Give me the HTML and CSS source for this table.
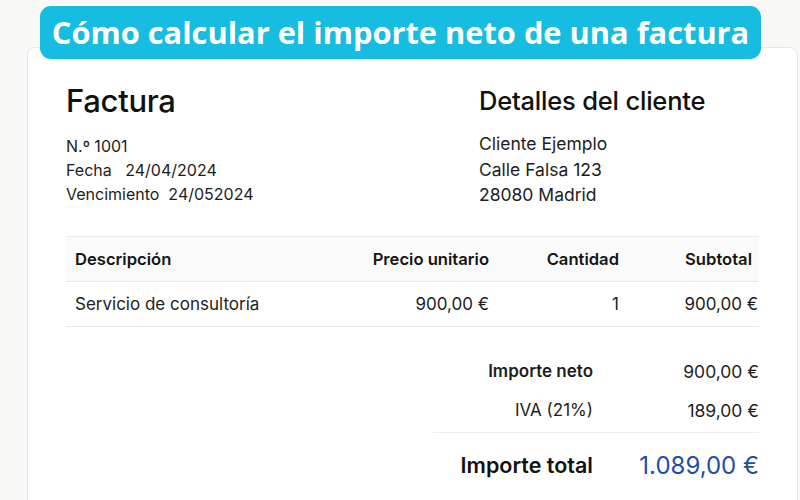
FILE: index.html
```html
<!DOCTYPE html>
<html lang="es">
<head>
<meta charset="utf-8">
<title>Factura</title>
<link rel="stylesheet" href="styles.css">
</head>
<body>
<div class="page">
  <h1 class="banner">Cómo calcular el importe neto de una factura</h1>
  <div class="card">
    <div class="top">
      <div class="col-left">
        <h2 class="h-invoice">Factura</h2>
        <div class="meta">
          <div>N.º 1001</div>
          <div>Fecha&nbsp;&nbsp; 24/04/2024</div>
          <div>Vencimiento&nbsp; 24/052024</div>
        </div>
      </div>
      <div class="col-right">
        <h2 class="h-client">Detalles del cliente</h2>
        <div class="client">
          <div>Cliente Ejemplo</div>
          <div>Calle Falsa 123</div>
          <div>28080 Madrid</div>
        </div>
      </div>
    </div>
    <div class="table">
      <div class="row head">
        <div class="c-desc">Descripción</div>
        <div class="c-price">Precio unitario</div>
        <div class="c-qty">Cantidad</div>
        <div class="c-sub">Subtotal</div>
      </div>
      <div class="row">
        <div class="c-desc">Servicio de consultoría</div>
        <div class="c-price">900,00 €</div>
        <div class="c-qty">1</div>
        <div class="c-sub val">900,00 €</div>
      </div>
    </div>
    <div class="totals">
      <div class="t-row">
        <div class="t-label strong">Importe neto</div>
        <div class="t-val">900,00 €</div>
      </div>
      <div class="t-row">
        <div class="t-label">IVA (21%)</div>
        <div class="t-val">189,00 €</div>
      </div>
      <div class="t-row total">
        <div class="t-label">Importe total</div>
        <div class="t-val">1.089,00 €</div>
      </div>
    </div>
  </div>
</div>
</body>
</html>
```

FILE: styles.css
```css
* { box-sizing: border-box; }
html, body { margin: 0; padding: 0; }
body {
  background: #f8f8f7;
  font-family: Inter, "Liberation Sans", sans-serif;
  color: #1a1a1a;
  width: 800px;
  height: 500px;
  overflow: hidden;
}
.page {
  padding-top: 6px;
  display: flex;
  flex-direction: column;
}
.banner {
  position: relative;
  z-index: 2;
  margin: 0 0 0 40px;
  width: 721px;
  height: 53px;
  background: #16bde0;
  border-radius: 11px;
  color: #fff;
  font-family: "Open Sans", sans-serif;
  font-weight: 700;
  font-size: 30.8px;
  line-height: 53px;
  text-align: center;
  letter-spacing: 0;
}
.card {
  margin: -12px 0 0 27px;
  width: 771px;
  height: 470px;
  background: #fff;
  border: 1px solid #e6e6e6;
  border-radius: 8px;
  padding: 34px 38px 0 38px;
}
.top {
  display: flex;
}
.col-left { width: 413px; }
.col-right { flex: 1; }
h2 {
  margin: 0;
  font-weight: 500;
  color: #111;
}
.h-invoice {
  font-size: 31px;
  line-height: 38px;
  letter-spacing: -0.3px;
}
.h-client {
  font-size: 25.5px;
  line-height: 38px;
  letter-spacing: -0.2px;
}
.meta {
  margin-top: 14px;
  font-size: 16px;
  line-height: 24px;
  color: #1d1d1d;
}
.client {
  margin-top: 11px;
  font-size: 17.5px;
  line-height: 25.5px;
  color: #1d1d1d;
}
.table {
  margin-top: 28px;
  border-top: 1px solid #ebebeb;
}
.row {
  display: grid;
  grid-template-columns: 1fr 150px 130px 140px;
  height: 45px;
  align-items: center;
  border-bottom: 1px solid #e8e8e8;
  font-size: 17px;
  color: #1d1d1d;
}
.row.head {
  background: #fafafa;
  font-weight: 600;
  font-size: 16.6px;
  color: #151515;
}
.c-desc { padding-left: 9px; }
.c-price, .c-qty, .c-sub { text-align: right; }
.c-sub { padding-right: 1px; }
.head .c-sub { padding-right: 7px; }
.totals {
  margin-top: 25px;
  margin-left: 367px;
  display: flex;
  flex-direction: column;
}
.t-row {
  display: grid;
  grid-template-columns: 1fr 166px;
  height: 39px;
  align-items: center;
  font-size: 17px;
  color: #1d1d1d;
}
.t-label { text-align: right; }
.t-val { text-align: right; font-size: 17.5px; }
.strong { font-weight: 600; }
.t-row.total {
  margin-top: 2px;
  border-top: 1px solid #ebebeb;
  height: 66px;
}
.total .t-label {
  font-size: 21.5px;
  font-weight: 600;
  color: #111;
}
.total .t-val {
  font-size: 24px;
  color: #1f4ea3;
}
```
